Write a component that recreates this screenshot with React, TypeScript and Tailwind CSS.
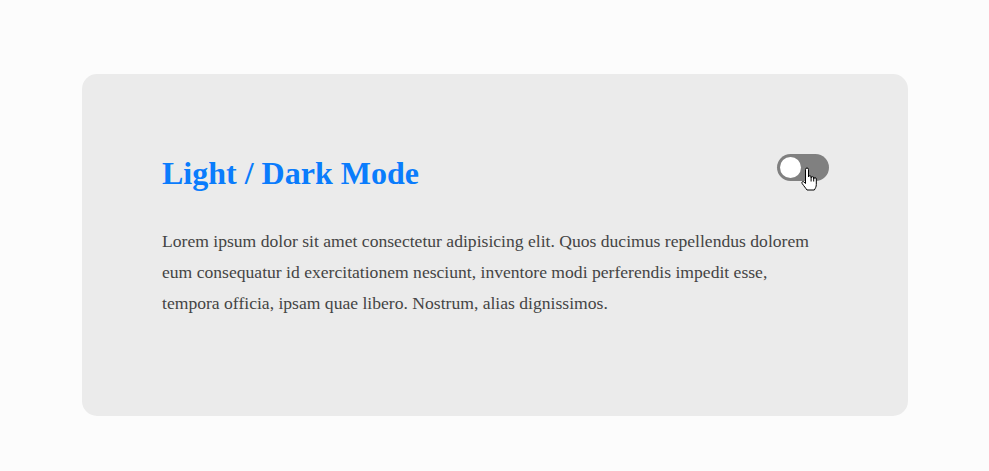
import { useState } from "react";

function HandCursor() {
  return (
    <svg
      width="19"
      height="25"
      viewBox="0 0 19 25"
      className="pointer-events-none absolute left-[23px] top-[13px]"
    >
      <path
        d="M5.5 2.5a1.5 1.5 0 0 1 3 0V10a1.3 1.3 0 0 1 2.6 0v1a1.3 1.3 0 0 1 2.6 0v1a1.3 1.3 0 0 1 2.6 0v5.5c0 2.2-0.9 3.8-2 5.5H7c-1.2-1.6-3.2-4.2-4.8-6.4-0.9-1.2 0.2-2.6 1.5-1.8L5.5 16.5Z"
        fill="#fff"
        stroke="#000"
        strokeWidth="1"
        strokeLinejoin="round"
      />
      <path d="M11.1 11v3.5M13.7 12v2.5" stroke="#000" strokeWidth="1" />
    </svg>
  );
}

export default function App() {
  const [dark, setDark] = useState(false);

  return (
    <div className="min-h-[471px] w-full bg-[#fcfcfc] pt-[74px] pl-[82px] font-['Liberation_Serif',serif]">
      <div className="w-[826px] h-[342px] rounded-[15px] bg-[#ebebeb] pl-[80px] pr-[79px] pt-[80px]">
        {/* HEADER */}
        <div className="flex items-center justify-between h-[38px]">
          <h2 className="text-[32px] leading-[38px] font-bold text-[#0a7cfc]">
            Light / Dark Mode
          </h2>
          <button
            onClick={() => setDark(!dark)}
            className="relative w-[52px] h-[27px] rounded-full bg-[#808080] flex items-center px-[3px] -mt-[11px]"
          >
            <span className="block w-[21px] h-[21px] rounded-full bg-white" />
            <HandCursor />
          </button>
        </div>

        {/* TEXT */}
        <p className="mt-[34px] text-[17.6px] leading-[31px] text-[#444] pr-[1px]">
          Lorem ipsum dolor sit amet consectetur adipisicing elit. Quos ducimus repellendus dolorem
          eum consequatur id exercitationem nesciunt, inventore modi perferendis impedit esse,
          tempora officia, ipsam quae libero. Nostrum, alias dignissimos.
        </p>
      </div>
    </div>
  );
}
